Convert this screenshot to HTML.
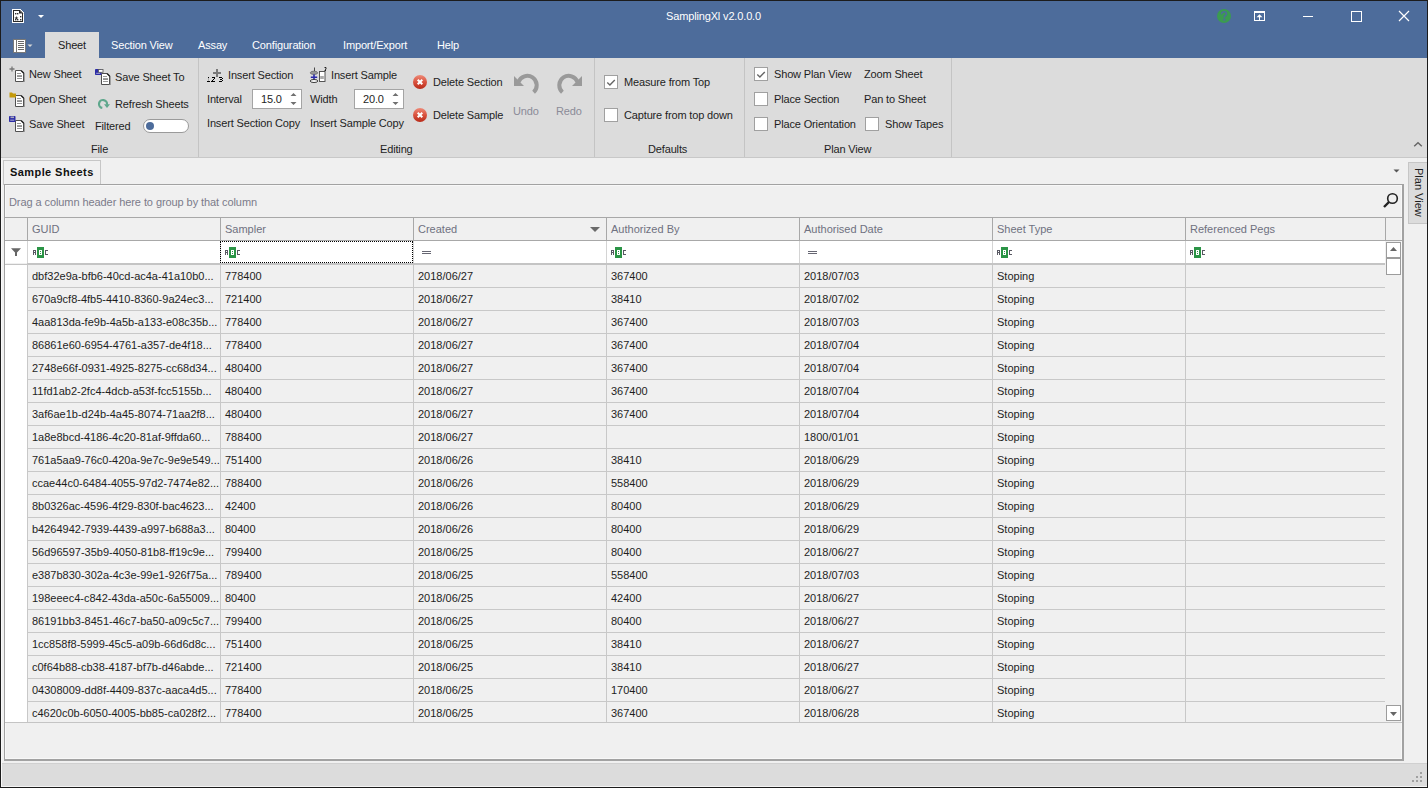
<!DOCTYPE html>
<html><head><meta charset="utf-8"><style>
html,body{margin:0;padding:0;}
body{width:1428px;height:788px;position:relative;overflow:hidden;background:#f0f0f0;font-family:"Liberation Sans", sans-serif;font-size:11px;}
body div{position:absolute;}
.t{white-space:pre;line-height:13px;}
.r{letter-spacing:-0.15px;}
</style></head><body>
<div style="left:0px;top:0px;width:1428px;height:58px;background:#4d6c9b"></div><div class="t r" style="left:666px;top:10px;font-size:11px;color:#fff">SamplingXl v2.0.0.0</div><svg style="position:absolute;left:12px;top:9px;" width="13" height="15" viewBox="0 0 13 15"><g shape-rendering="crispEdges"><path d="M0 0 H8 L12 4 V14 H0 Z" fill="#fff"/><rect x="1" y="1" width="7" height="1" fill="#2a2a2a"/><rect x="1" y="1" width="1" height="12" fill="#2a2a2a"/><rect x="1" y="12" width="10" height="1" fill="#2a2a2a"/><rect x="10" y="4" width="1" height="9" fill="#2a2a2a"/></g><path d="M7 1 L7 4.5 L10.8 4.5 Z" fill="#2a2a2a"/><path d="M7.5 1 L10.8 4.3" stroke="#2a2a2a" stroke-width="1"/><g fill="#333"><rect x="3" y="4" width="1.4" height="1.4"/><rect x="5" y="4" width="1.4" height="1.4"/><rect x="8" y="7" width="1.4" height="1.4"/><rect x="8" y="10" width="1.4" height="1.4"/><rect x="3" y="10" width="1.4" height="1.4"/><rect x="5" y="10" width="1.4" height="1.4"/></g><path d="M4.4 6.9 L5 8.4 L6.5 8.4 L5.3 9.3 L5.8 10.8 L4.4 9.9 L3 10.8 L3.5 9.3 L2.3 8.4 L3.8 8.4 Z" fill="#333"/></svg><svg style="position:absolute;left:37px;top:14px;" width="8" height="5" viewBox="0 0 8 5"><path d="M1 1 H7 L4 4 Z" fill="#fff"/></svg><svg style="position:absolute;left:13px;top:39px;" width="13" height="14" viewBox="0 0 13 14"><rect x="0.5" y="0.5" width="12" height="13" fill="#fff" stroke="#787878"/><line x1="3.5" y1="0.5" x2="3.5" y2="13.5" stroke="#787878"/><line x1="5" y1="2.5" x2="11" y2="2.5" stroke="#6a6a6a" stroke-width="1"/><line x1="5" y1="4.5" x2="11" y2="4.5" stroke="#6a6a6a" stroke-width="1"/><line x1="5" y1="6.5" x2="11" y2="6.5" stroke="#6a6a6a" stroke-width="1"/><line x1="5" y1="8.5" x2="11" y2="8.5" stroke="#6a6a6a" stroke-width="1"/><line x1="5" y1="10.5" x2="11" y2="10.5" stroke="#6a6a6a" stroke-width="1"/></svg><svg style="position:absolute;left:27px;top:44px;" width="6" height="4" viewBox="0 0 6 4"><path d="M0.5 0.5 H5.5 L3 3 Z" fill="#d8d8d8"/></svg><svg style="position:absolute;left:1217px;top:9px;" width="14" height="14" viewBox="0 0 14 14"><circle cx="7" cy="7" r="7" fill="#3b9b50"/><path d="M4.6 5.2 C4.6 3.6 5.7 2.8 7 2.8 C8.4 2.8 9.4 3.7 9.4 4.9 C9.4 6.3 7.7 6.6 7.4 7.8 L7.3 8.6" fill="none" stroke="#4d6c9b" stroke-width="1.6"/><rect x="6.3" y="9.6" width="2" height="2" fill="#4d6c9b"/></svg><svg style="position:absolute;left:1254px;top:11px;" width="11" height="10" viewBox="0 0 11 10"><g shape-rendering="crispEdges" fill="#fff"><rect x="0" y="0" width="11" height="2"/><rect x="0" y="0" width="1" height="10"/><rect x="10" y="0" width="1" height="10"/><rect x="0" y="9" width="11" height="1"/><rect x="5" y="5" width="1" height="4"/></g><path d="M2.5 6.3 L5.5 3.2 L8.5 6.3 Z" fill="#fff"/></svg><div style="left:1303px;top:16px;width:10px;height:1px;background:#fff"></div><svg style="position:absolute;left:1351px;top:11px;" width="11" height="11" viewBox="0 0 11 11"><rect x="0.5" y="0.5" width="10" height="10" fill="none" stroke="#fff"/></svg><svg style="position:absolute;left:1398px;top:10px;" width="12" height="12" viewBox="0 0 12 12"><path d="M1 1 L11 11 M11 1 L1 11" stroke="#fff" stroke-width="1.2"/></svg><div style="left:45px;top:32px;width:54px;height:26px;background:#dcdcdc"></div><div class="t r" style="left:58px;top:39px;font-size:11px;color:#1a1a1a">Sheet</div><div class="t r" style="left:111px;top:39px;font-size:11px;color:#fff">Section View</div><div class="t r" style="left:198px;top:39px;font-size:11px;color:#fff">Assay</div><div class="t r" style="left:252px;top:39px;font-size:11px;color:#fff">Configuration</div><div class="t r" style="left:343px;top:39px;font-size:11px;color:#fff">Import/Export</div><div class="t r" style="left:437px;top:39px;font-size:11px;color:#fff">Help</div><div style="left:0px;top:58px;width:1428px;height:99px;background:#dcdcdc"></div><div style="left:0px;top:157px;width:1428px;height:1px;background:#c8c8c8"></div><div style="left:198px;top:58px;width:1px;height:99px;background:#c4c4c4"></div><div style="left:594px;top:58px;width:1px;height:99px;background:#c4c4c4"></div><div style="left:744px;top:58px;width:1px;height:99px;background:#c4c4c4"></div><div style="left:951px;top:58px;width:1px;height:99px;background:#c4c4c4"></div><div class="t r" style="left:91px;top:143px;font-size:11px;color:#1e1e1e">File</div><div class="t r" style="left:380px;top:143px;font-size:11px;color:#1e1e1e">Editing</div><div class="t r" style="left:648px;top:143px;font-size:11px;color:#1e1e1e">Defaults</div><div class="t r" style="left:824px;top:143px;font-size:11px;color:#1e1e1e">Plan View</div><svg style="position:absolute;left:1412px;top:140px;" width="12" height="8" viewBox="0 0 12 8"><path d="M2.2 6.3 L6 2.7 L9.8 6.3" fill="none" stroke="#666" stroke-width="1.4"/></svg><svg style="position:absolute;left:15px;top:70px;" width="11" height="13" viewBox="0 0 11 13"><path d="M0.5 0.5 H6 L8.5 3 V11.5 H0.5 Z" fill="#fff" stroke="#505050" stroke-width="1"/><path d="M6 0.5 L8.8 3.3" stroke="#222" stroke-width="1.3"/><line x1="9.5" y1="3" x2="9.5" y2="12" stroke="#a0a0a0"/><line x1="2" y1="3.5" x2="6" y2="3.5" stroke="#999"/><rect x="2" y="5.3" width="5" height="1.5" fill="#777"/><line x1="2" y1="8.5" x2="7" y2="8.5" stroke="#999"/></svg><svg style="position:absolute;left:9px;top:66px;" width="6" height="6" viewBox="0 0 6 6"><path d="M3 0.5 V5.5 M0.5 3 H5.5" stroke="#777" stroke-width="1.3"/></svg><svg style="position:absolute;left:15px;top:95px;" width="11" height="13" viewBox="0 0 11 13"><path d="M0.5 0.5 H6 L8.5 3 V11.5 H0.5 Z" fill="#fff" stroke="#505050" stroke-width="1"/><path d="M6 0.5 L8.8 3.3" stroke="#222" stroke-width="1.3"/><line x1="9.5" y1="3" x2="9.5" y2="12" stroke="#a0a0a0"/><line x1="2" y1="3.5" x2="6" y2="3.5" stroke="#999"/><rect x="2" y="5.3" width="5" height="1.5" fill="#777"/><line x1="2" y1="8.5" x2="7" y2="8.5" stroke="#999"/></svg><svg style="position:absolute;left:9px;top:91px;" width="8" height="7" viewBox="0 0 8 7"><path d="M0.5 1.5 H3 L4 2.5 H7 V6.5 H0.5 Z" fill="#c49a0c"/></svg><svg style="position:absolute;left:15px;top:120px;" width="11" height="13" viewBox="0 0 11 13"><path d="M0.5 0.5 H6 L8.5 3 V11.5 H0.5 Z" fill="#fff" stroke="#505050" stroke-width="1"/><path d="M6 0.5 L8.8 3.3" stroke="#222" stroke-width="1.3"/><line x1="9.5" y1="3" x2="9.5" y2="12" stroke="#a0a0a0"/><line x1="2" y1="3.5" x2="6" y2="3.5" stroke="#999"/><rect x="2" y="5.3" width="5" height="1.5" fill="#777"/><line x1="2" y1="8.5" x2="7" y2="8.5" stroke="#999"/></svg><svg style="position:absolute;left:9px;top:116px;" width="7" height="6" viewBox="0 0 7 6"><rect x="0" y="0" width="6.5" height="6" rx="0.8" fill="#2c2ca6"/><rect x="1.5" y="0.5" width="3.5" height="1.6" fill="#aab"/><rect x="1.2" y="3.6" width="4" height="1.2" fill="#99c"/></svg><svg style="position:absolute;left:101px;top:73px;" width="11" height="13" viewBox="0 0 11 13"><path d="M0.5 0.5 H6 L8.5 3 V11.5 H0.5 Z" fill="#fff" stroke="#505050" stroke-width="1"/><path d="M6 0.5 L8.8 3.3" stroke="#222" stroke-width="1.3"/><line x1="9.5" y1="3" x2="9.5" y2="12" stroke="#a0a0a0"/><line x1="2" y1="3.5" x2="6" y2="3.5" stroke="#999"/><rect x="2" y="5.3" width="5" height="1.5" fill="#777"/><line x1="2" y1="8.5" x2="7" y2="8.5" stroke="#999"/></svg><svg style="position:absolute;left:95px;top:69px;" width="9" height="7" viewBox="0 0 9 7"><rect x="0" y="0" width="6.5" height="6" rx="0.8" fill="#2c2ca6"/><rect x="3.5" y="0.5" width="4.5" height="2.8" fill="#fff" stroke="#555" stroke-width="0.8"/><rect x="1.2" y="3.8" width="4" height="1.1" fill="#99c"/></svg><svg style="position:absolute;left:97px;top:98px;" width="14" height="13" viewBox="0 0 14 13"><path d="M5.3 9.94 A4 4 0 1 1 9.94 6.69" fill="none" stroke="#5ea78c" stroke-width="2.2"/><path d="M7 6.2 L13 6.2 L10 9.9 Z" fill="#5ea78c"/></svg><div class="t r" style="left:29px;top:68px;font-size:11px;color:#1e1e1e">New Sheet</div><div class="t r" style="left:29px;top:93px;font-size:11px;color:#1e1e1e">Open Sheet</div><div class="t r" style="left:29px;top:118px;font-size:11px;color:#1e1e1e">Save Sheet</div><div class="t r" style="left:115px;top:71px;font-size:11px;color:#1e1e1e">Save Sheet To</div><div class="t r" style="left:115px;top:98px;font-size:11px;color:#1e1e1e">Refresh Sheets</div><div class="t r" style="left:95px;top:120px;font-size:11px;color:#1e1e1e">Filtered</div><div style="left:143px;top:119px;width:44px;height:12px;background:#fff;border:1px solid #9a9a9a;border-radius:7px"></div><div style="left:146px;top:122px;width:8px;height:8px;background:#4d6c9b;border-radius:50%"></div><svg style="position:absolute;left:204px;top:64px;" width="20" height="20" viewBox="0 0 20 20"><path d="M13 5 V13 M9 9 H17" stroke="#7a7a7a" stroke-width="2"/><rect x="4" y="13" width="1" height="1" fill="#000"/><rect x="4" y="14" width="1" height="3" fill="#b0b0b0"/><rect x="3" y="17" width="3" height="1" fill="#000"/><rect x="8" y="13" width="3" height="1" fill="#000"/><rect x="10" y="14" width="1" height="1" fill="#000"/><rect x="9" y="15" width="1" height="1" fill="#000"/><rect x="8" y="16" width="1" height="1" fill="#000"/><rect x="7" y="17" width="4" height="1" fill="#000"/><rect x="15" y="13" width="3" height="1" fill="#000"/><rect x="18" y="14" width="1" height="1" fill="#000"/><rect x="16" y="15" width="2" height="1" fill="#000"/><rect x="18" y="16" width="1" height="1" fill="#000"/><rect x="15" y="17" width="3" height="1" fill="#000"/></svg><svg style="position:absolute;left:309px;top:66px;" width="18" height="18" viewBox="0 0 18 18"><ellipse cx="5" cy="6.8" rx="3.7" ry="1.6" fill="#999" stroke="#777"/><path d="M5 8.5 V15 M1.8 11.3 H8.2" stroke="#2a2aa8" stroke-width="1.6"/><ellipse cx="5" cy="15" rx="3.8" ry="1.5" fill="#fff" stroke="#3a3a3a" stroke-width="1"/><line x1="5.5" y1="1.5" x2="5.5" y2="5" stroke="#222" stroke-width="0.8"/><rect x="10.5" y="5.5" width="5.5" height="10" fill="#fff" stroke="#444" stroke-width="0.9"/><rect x="11.2" y="10" width="3.6" height="3" fill="#aaa"/><path d="M15.5 1.5 H17 V3 L15.8 4.5 H17" fill="none" stroke="#111" stroke-width="0.9"/></svg><div class="t r" style="left:228px;top:69px;font-size:11px;color:#1e1e1e">Insert Section</div><div class="t r" style="left:331px;top:69px;font-size:11px;color:#1e1e1e">Insert Sample</div><div class="t r" style="left:207px;top:93px;font-size:11px;color:#1e1e1e">Interval</div><div class="t r" style="left:310px;top:93px;font-size:11px;color:#1e1e1e">Width</div><div class="t r" style="left:207px;top:117px;font-size:11px;color:#1e1e1e">Insert Section Copy</div><div class="t r" style="left:310px;top:117px;font-size:11px;color:#1e1e1e">Insert Sample Copy</div><div class="t r" style="left:433px;top:76px;font-size:11px;color:#1e1e1e">Delete Section</div><div class="t r" style="left:433px;top:109px;font-size:11px;color:#1e1e1e">Delete Sample</div><div style="left:252px;top:89px;width:48px;height:18px;background:#fff;border:1px solid #a4a4a4"></div><div class="t r" style="left:261px;top:93px;font-size:11px;color:#1e1e1e">15.0</div><svg style="position:absolute;left:290px;top:92px;" width="8" height="14" viewBox="0 0 8 14"><path d="M0.5 4 H6.5 L3.5 1 Z M0.5 10 H6.5 L3.5 13 Z" fill="#707070"/></svg><div style="left:354px;top:89px;width:48px;height:18px;background:#fff;border:1px solid #a4a4a4"></div><div class="t r" style="left:363px;top:93px;font-size:11px;color:#1e1e1e">20.0</div><svg style="position:absolute;left:392px;top:92px;" width="8" height="14" viewBox="0 0 8 14"><path d="M0.5 4 H6.5 L3.5 1 Z M0.5 10 H6.5 L3.5 13 Z" fill="#707070"/></svg><svg style="position:absolute;left:413px;top:75px;" width="14" height="14" viewBox="0 0 14 14"><defs><linearGradient id="rg" x1="0" y1="0" x2="0" y2="1"><stop offset="0" stop-color="#ee8a78"/><stop offset="0.5" stop-color="#d9533f"/><stop offset="1" stop-color="#b82a18"/></linearGradient></defs><circle cx="7" cy="7" r="7" fill="url(#rg)"/><path d="M4.7 4.7 L9.3 9.3 M9.3 4.7 L4.7 9.3" stroke="#fff" stroke-width="2"/></svg><svg style="position:absolute;left:413px;top:108px;" width="14" height="14" viewBox="0 0 14 14"><defs><linearGradient id="rg" x1="0" y1="0" x2="0" y2="1"><stop offset="0" stop-color="#ee8a78"/><stop offset="0.5" stop-color="#d9533f"/><stop offset="1" stop-color="#b82a18"/></linearGradient></defs><circle cx="7" cy="7" r="7" fill="url(#rg)"/><path d="M4.7 4.7 L9.3 9.3 M9.3 4.7 L4.7 9.3" stroke="#fff" stroke-width="2"/></svg><svg style="position:absolute;left:513px;top:73px;" width="27" height="22" viewBox="0 0 27 22"><path d="M5.47 8.98 A9.4 9.4 0 1 1 20.6 19.2" fill="none" stroke="#9a9a9a" stroke-width="4"/><path d="M1 3 V13 H11 Z" fill="#9a9a9a"/></svg><svg style="position:absolute;left:556px;top:73px;" width="27" height="22" viewBox="0 0 27 22"><g transform="translate(27,0) scale(-1,1)"><path d="M5.47 8.98 A9.4 9.4 0 1 1 20.6 19.2" fill="none" stroke="#9a9a9a" stroke-width="4"/><path d="M1 3 V13 H11 Z" fill="#9a9a9a"/></g></svg><div class="t r" style="left:513px;top:105px;font-size:11px;color:#8b8b98">Undo</div><div class="t r" style="left:556px;top:105px;font-size:11px;color:#8b8b98">Redo</div><div style="left:604px;top:75px;width:12px;height:12px;background:#fff;border:1px solid #a0a0a0"></div><svg style="position:absolute;left:604px;top:75px;" width="14" height="14" viewBox="0 0 14 14"><path d="M3.3 7.6 L5.9 10 L10.8 5" fill="none" stroke="#666" stroke-width="1.4"/></svg><div class="t r" style="left:624px;top:76px;font-size:11px;color:#1e1e1e">Measure from Top</div><div style="left:604px;top:108px;width:12px;height:12px;background:#fff;border:1px solid #a0a0a0"></div><div class="t r" style="left:624px;top:109px;font-size:11px;color:#1e1e1e">Capture from top down</div><div style="left:754px;top:67px;width:12px;height:12px;background:#fff;border:1px solid #a0a0a0"></div><svg style="position:absolute;left:754px;top:67px;" width="14" height="14" viewBox="0 0 14 14"><path d="M3.3 7.6 L5.9 10 L10.8 5" fill="none" stroke="#666" stroke-width="1.4"/></svg><div class="t r" style="left:774px;top:68px;font-size:11px;color:#1e1e1e">Show Plan View</div><div style="left:754px;top:92px;width:12px;height:12px;background:#fff;border:1px solid #a0a0a0"></div><div class="t r" style="left:774px;top:93px;font-size:11px;color:#1e1e1e">Place Section</div><div style="left:754px;top:117px;width:12px;height:12px;background:#fff;border:1px solid #a0a0a0"></div><div class="t r" style="left:774px;top:118px;font-size:11px;color:#1e1e1e">Place Orientation</div><div class="t r" style="left:864px;top:68px;font-size:11px;color:#1e1e1e">Zoom Sheet</div><div class="t r" style="left:864px;top:93px;font-size:11px;color:#1e1e1e">Pan to Sheet</div><div style="left:865px;top:117px;width:12px;height:12px;background:#fff;border:1px solid #a0a0a0"></div><div class="t r" style="left:885px;top:118px;font-size:11px;color:#1e1e1e">Show Tapes</div><div style="left:0px;top:158px;width:1428px;height:605px;background:#f0f0f0"></div><div style="left:3px;top:160px;width:96px;height:24px;border:1px solid #c6c6c6;border-bottom:none;background:#f0f0f0"></div><div class="t" style="left:10px;top:166px;font-size:11px;color:#111;font-weight:bold;letter-spacing:0.42px">Sample Sheets</div><svg style="position:absolute;left:1393px;top:169px;" width="8" height="5" viewBox="0 0 8 5"><path d="M0.5 0.5 H6.5 L3.5 3.5 Z" fill="#555"/></svg><div style="left:1408px;top:162px;width:19px;height:60px;background:#dcdcdc;border:1px solid #c6c6c6;border-right:none"></div><div class="t" style="left:1425px;top:168px;transform-origin:0 0;transform:rotate(90deg);color:#1e1e1e">Plan View</div><div style="left:4px;top:184px;width:1400px;height:577px;border:1px solid #a2a2a2;border-right-width:2px;border-bottom-width:2px;background:#f0f0f0;box-sizing:border-box;box-shadow:inset 1px 1px 0 #f8f8f8,inset -1px -1px 0 #f8f8f8"></div><div class="t" style="left:9px;top:196px;font-size:11px;color:#7b7b8a;letter-spacing:-0.08px">Drag a column header here to group by that column</div><svg style="position:absolute;left:1382px;top:192px;" width="18" height="19" viewBox="0 0 18 19"><circle cx="10.5" cy="6.5" r="4.8" fill="none" stroke="#222" stroke-width="1.6"/><path d="M7 10 L2 15" stroke="#222" stroke-width="2.4"/></svg><div style="left:5px;top:217px;width:1397px;height:1px;background:#a8a8a8"></div><div style="left:5px;top:240px;width:1397px;height:1px;background:#a8a8a8"></div><div style="left:5px;top:241px;width:1380px;height:22px;background:#fff"></div><div style="left:27px;top:263px;width:1358px;height:2px;background:#c4c4c4"></div><div style="left:5px;top:264px;width:22px;height:1px;background:#c4c4c4"></div><div style="left:5px;top:265px;width:22px;height:457px;background:#fff"></div><div style="left:27px;top:218px;width:1px;height:22px;background:#a8a8a8"></div><div style="left:27px;top:241px;width:1px;height:22px;background:#d4d4d4"></div><div style="left:27px;top:265px;width:1px;height:457px;background:#c8c8c8"></div><div style="left:220px;top:218px;width:1px;height:22px;background:#a8a8a8"></div><div style="left:220px;top:241px;width:1px;height:22px;background:#d4d4d4"></div><div style="left:220px;top:265px;width:1px;height:457px;background:#c8c8c8"></div><div style="left:413px;top:218px;width:1px;height:22px;background:#a8a8a8"></div><div style="left:413px;top:241px;width:1px;height:22px;background:#d4d4d4"></div><div style="left:413px;top:265px;width:1px;height:457px;background:#c8c8c8"></div><div style="left:606px;top:218px;width:1px;height:22px;background:#a8a8a8"></div><div style="left:606px;top:241px;width:1px;height:22px;background:#d4d4d4"></div><div style="left:606px;top:265px;width:1px;height:457px;background:#c8c8c8"></div><div style="left:799px;top:218px;width:1px;height:22px;background:#a8a8a8"></div><div style="left:799px;top:241px;width:1px;height:22px;background:#d4d4d4"></div><div style="left:799px;top:265px;width:1px;height:457px;background:#c8c8c8"></div><div style="left:992px;top:218px;width:1px;height:22px;background:#a8a8a8"></div><div style="left:992px;top:241px;width:1px;height:22px;background:#d4d4d4"></div><div style="left:992px;top:265px;width:1px;height:457px;background:#c8c8c8"></div><div style="left:1185px;top:218px;width:1px;height:22px;background:#a8a8a8"></div><div style="left:1185px;top:241px;width:1px;height:22px;background:#d4d4d4"></div><div style="left:1185px;top:265px;width:1px;height:457px;background:#c8c8c8"></div><div style="left:1385px;top:218px;width:1px;height:22px;background:#a8a8a8"></div><div class="t" style="left:32px;top:223px;font-size:11px;color:#6f7180">GUID</div><div class="t" style="left:225px;top:223px;font-size:11px;color:#6f7180">Sampler</div><div class="t" style="left:418px;top:223px;font-size:11px;color:#6f7180">Created</div><div class="t" style="left:611px;top:223px;font-size:11px;color:#6f7180">Authorized By</div><div class="t" style="left:804px;top:223px;font-size:11px;color:#6f7180">Authorised Date</div><div class="t" style="left:997px;top:223px;font-size:11px;color:#6f7180">Sheet Type</div><div class="t" style="left:1190px;top:223px;font-size:11px;color:#6f7180">Referenced Pegs</div><svg style="position:absolute;left:589px;top:226px;" width="12" height="8" viewBox="0 0 12 8"><path d="M1 1 H11 L6 6 Z" fill="#6a6a6a"/></svg><svg style="position:absolute;left:11px;top:248px;" width="11" height="9" viewBox="0 0 11 9"><path d="M0 0.3 H10 L6 4.5 V8 H4 V4.5 Z" fill="#666"/></svg><svg style="position:absolute;left:33px;top:247px;" width="15" height="11" viewBox="0 0 15 11"><g shape-rendering="crispEdges"><g fill="#585862"><rect x="0" y="3" width="3" height="1"/><rect x="0" y="3" width="1" height="5"/><rect x="2" y="3" width="1" height="5"/><rect x="0" y="5" width="3" height="1"/><rect x="12" y="3" width="3" height="1"/><rect x="12" y="3" width="1" height="5"/><rect x="12" y="7" width="3" height="1"/></g><rect x="4" y="0" width="7" height="11" fill="#2b9446"/><rect x="6" y="3" width="3" height="5" fill="#fff"/><rect x="7" y="4" width="1" height="1" fill="#2b9446"/><rect x="7" y="6" width="1" height="1" fill="#2b9446"/></g></svg><svg style="position:absolute;left:225px;top:247px;" width="15" height="11" viewBox="0 0 15 11"><g shape-rendering="crispEdges"><g fill="#585862"><rect x="0" y="3" width="3" height="1"/><rect x="0" y="3" width="1" height="5"/><rect x="2" y="3" width="1" height="5"/><rect x="0" y="5" width="3" height="1"/><rect x="12" y="3" width="3" height="1"/><rect x="12" y="3" width="1" height="5"/><rect x="12" y="7" width="3" height="1"/></g><rect x="4" y="0" width="7" height="11" fill="#2b9446"/><rect x="6" y="3" width="3" height="5" fill="#fff"/><rect x="7" y="4" width="1" height="1" fill="#2b9446"/><rect x="7" y="6" width="1" height="1" fill="#2b9446"/></g></svg><svg style="position:absolute;left:611px;top:247px;" width="15" height="11" viewBox="0 0 15 11"><g shape-rendering="crispEdges"><g fill="#585862"><rect x="0" y="3" width="3" height="1"/><rect x="0" y="3" width="1" height="5"/><rect x="2" y="3" width="1" height="5"/><rect x="0" y="5" width="3" height="1"/><rect x="12" y="3" width="3" height="1"/><rect x="12" y="3" width="1" height="5"/><rect x="12" y="7" width="3" height="1"/></g><rect x="4" y="0" width="7" height="11" fill="#2b9446"/><rect x="6" y="3" width="3" height="5" fill="#fff"/><rect x="7" y="4" width="1" height="1" fill="#2b9446"/><rect x="7" y="6" width="1" height="1" fill="#2b9446"/></g></svg><svg style="position:absolute;left:997px;top:247px;" width="15" height="11" viewBox="0 0 15 11"><g shape-rendering="crispEdges"><g fill="#585862"><rect x="0" y="3" width="3" height="1"/><rect x="0" y="3" width="1" height="5"/><rect x="2" y="3" width="1" height="5"/><rect x="0" y="5" width="3" height="1"/><rect x="12" y="3" width="3" height="1"/><rect x="12" y="3" width="1" height="5"/><rect x="12" y="7" width="3" height="1"/></g><rect x="4" y="0" width="7" height="11" fill="#2b9446"/><rect x="6" y="3" width="3" height="5" fill="#fff"/><rect x="7" y="4" width="1" height="1" fill="#2b9446"/><rect x="7" y="6" width="1" height="1" fill="#2b9446"/></g></svg><svg style="position:absolute;left:1190px;top:247px;" width="15" height="11" viewBox="0 0 15 11"><g shape-rendering="crispEdges"><g fill="#585862"><rect x="0" y="3" width="3" height="1"/><rect x="0" y="3" width="1" height="5"/><rect x="2" y="3" width="1" height="5"/><rect x="0" y="5" width="3" height="1"/><rect x="12" y="3" width="3" height="1"/><rect x="12" y="3" width="1" height="5"/><rect x="12" y="7" width="3" height="1"/></g><rect x="4" y="0" width="7" height="11" fill="#2b9446"/><rect x="6" y="3" width="3" height="5" fill="#fff"/><rect x="7" y="4" width="1" height="1" fill="#2b9446"/><rect x="7" y="6" width="1" height="1" fill="#2b9446"/></g></svg><div style="left:422px;top:251px;width:9px;height:1px;background:#666672"></div><div style="left:422px;top:253px;width:9px;height:1px;background:#666672"></div><div style="left:808px;top:251px;width:9px;height:1px;background:#666672"></div><div style="left:808px;top:253px;width:9px;height:1px;background:#666672"></div><div style="left:220px;top:241px;width:193px;height:22px;border:1px dotted #000;box-sizing:border-box"></div><div style="left:28px;top:287px;width:1357px;height:1px;background:#c8c8c8"></div><div class="t" style="left:32px;top:270px;font-size:11px;color:#1e1e1e">dbf32e9a-bfb6-40cd-ac4a-41a10b0...</div><div class="t" style="left:225px;top:270px;font-size:11px;color:#1e1e1e">778400</div><div class="t" style="left:418px;top:270px;font-size:11px;color:#1e1e1e">2018/06/27</div><div class="t" style="left:611px;top:270px;font-size:11px;color:#1e1e1e">367400</div><div class="t" style="left:804px;top:270px;font-size:11px;color:#1e1e1e">2018/07/03</div><div class="t" style="left:997px;top:270px;font-size:11px;color:#1e1e1e">Stoping</div><div style="left:28px;top:310px;width:1357px;height:1px;background:#c8c8c8"></div><div class="t" style="left:32px;top:293px;font-size:11px;color:#1e1e1e">670a9cf8-4fb5-4410-8360-9a24ec3...</div><div class="t" style="left:225px;top:293px;font-size:11px;color:#1e1e1e">721400</div><div class="t" style="left:418px;top:293px;font-size:11px;color:#1e1e1e">2018/06/27</div><div class="t" style="left:611px;top:293px;font-size:11px;color:#1e1e1e">38410</div><div class="t" style="left:804px;top:293px;font-size:11px;color:#1e1e1e">2018/07/02</div><div class="t" style="left:997px;top:293px;font-size:11px;color:#1e1e1e">Stoping</div><div style="left:28px;top:333px;width:1357px;height:1px;background:#c8c8c8"></div><div class="t" style="left:32px;top:316px;font-size:11px;color:#1e1e1e">4aa813da-fe9b-4a5b-a133-e08c35b...</div><div class="t" style="left:225px;top:316px;font-size:11px;color:#1e1e1e">778400</div><div class="t" style="left:418px;top:316px;font-size:11px;color:#1e1e1e">2018/06/27</div><div class="t" style="left:611px;top:316px;font-size:11px;color:#1e1e1e">367400</div><div class="t" style="left:804px;top:316px;font-size:11px;color:#1e1e1e">2018/07/03</div><div class="t" style="left:997px;top:316px;font-size:11px;color:#1e1e1e">Stoping</div><div style="left:28px;top:356px;width:1357px;height:1px;background:#c8c8c8"></div><div class="t" style="left:32px;top:339px;font-size:11px;color:#1e1e1e">86861e60-6954-4761-a357-de4f18...</div><div class="t" style="left:225px;top:339px;font-size:11px;color:#1e1e1e">778400</div><div class="t" style="left:418px;top:339px;font-size:11px;color:#1e1e1e">2018/06/27</div><div class="t" style="left:611px;top:339px;font-size:11px;color:#1e1e1e">367400</div><div class="t" style="left:804px;top:339px;font-size:11px;color:#1e1e1e">2018/07/04</div><div class="t" style="left:997px;top:339px;font-size:11px;color:#1e1e1e">Stoping</div><div style="left:28px;top:379px;width:1357px;height:1px;background:#c8c8c8"></div><div class="t" style="left:32px;top:362px;font-size:11px;color:#1e1e1e">2748e66f-0931-4925-8275-cc68d34...</div><div class="t" style="left:225px;top:362px;font-size:11px;color:#1e1e1e">480400</div><div class="t" style="left:418px;top:362px;font-size:11px;color:#1e1e1e">2018/06/27</div><div class="t" style="left:611px;top:362px;font-size:11px;color:#1e1e1e">367400</div><div class="t" style="left:804px;top:362px;font-size:11px;color:#1e1e1e">2018/07/04</div><div class="t" style="left:997px;top:362px;font-size:11px;color:#1e1e1e">Stoping</div><div style="left:28px;top:402px;width:1357px;height:1px;background:#c8c8c8"></div><div class="t" style="left:32px;top:385px;font-size:11px;color:#1e1e1e">11fd1ab2-2fc4-4dcb-a53f-fcc5155b...</div><div class="t" style="left:225px;top:385px;font-size:11px;color:#1e1e1e">480400</div><div class="t" style="left:418px;top:385px;font-size:11px;color:#1e1e1e">2018/06/27</div><div class="t" style="left:611px;top:385px;font-size:11px;color:#1e1e1e">367400</div><div class="t" style="left:804px;top:385px;font-size:11px;color:#1e1e1e">2018/07/04</div><div class="t" style="left:997px;top:385px;font-size:11px;color:#1e1e1e">Stoping</div><div style="left:28px;top:425px;width:1357px;height:1px;background:#c8c8c8"></div><div class="t" style="left:32px;top:408px;font-size:11px;color:#1e1e1e">3af6ae1b-d24b-4a45-8074-71aa2f8...</div><div class="t" style="left:225px;top:408px;font-size:11px;color:#1e1e1e">480400</div><div class="t" style="left:418px;top:408px;font-size:11px;color:#1e1e1e">2018/06/27</div><div class="t" style="left:611px;top:408px;font-size:11px;color:#1e1e1e">367400</div><div class="t" style="left:804px;top:408px;font-size:11px;color:#1e1e1e">2018/07/04</div><div class="t" style="left:997px;top:408px;font-size:11px;color:#1e1e1e">Stoping</div><div style="left:28px;top:448px;width:1357px;height:1px;background:#c8c8c8"></div><div class="t" style="left:32px;top:431px;font-size:11px;color:#1e1e1e">1a8e8bcd-4186-4c20-81af-9ffda60...</div><div class="t" style="left:225px;top:431px;font-size:11px;color:#1e1e1e">788400</div><div class="t" style="left:418px;top:431px;font-size:11px;color:#1e1e1e">2018/06/27</div><div class="t" style="left:804px;top:431px;font-size:11px;color:#1e1e1e">1800/01/01</div><div class="t" style="left:997px;top:431px;font-size:11px;color:#1e1e1e">Stoping</div><div style="left:28px;top:471px;width:1357px;height:1px;background:#c8c8c8"></div><div class="t" style="left:32px;top:454px;font-size:11px;color:#1e1e1e">761a5aa9-76c0-420a-9e7c-9e9e549...</div><div class="t" style="left:225px;top:454px;font-size:11px;color:#1e1e1e">751400</div><div class="t" style="left:418px;top:454px;font-size:11px;color:#1e1e1e">2018/06/26</div><div class="t" style="left:611px;top:454px;font-size:11px;color:#1e1e1e">38410</div><div class="t" style="left:804px;top:454px;font-size:11px;color:#1e1e1e">2018/06/29</div><div class="t" style="left:997px;top:454px;font-size:11px;color:#1e1e1e">Stoping</div><div style="left:28px;top:494px;width:1357px;height:1px;background:#c8c8c8"></div><div class="t" style="left:32px;top:477px;font-size:11px;color:#1e1e1e">ccae44c0-6484-4055-97d2-7474e82...</div><div class="t" style="left:225px;top:477px;font-size:11px;color:#1e1e1e">788400</div><div class="t" style="left:418px;top:477px;font-size:11px;color:#1e1e1e">2018/06/26</div><div class="t" style="left:611px;top:477px;font-size:11px;color:#1e1e1e">558400</div><div class="t" style="left:804px;top:477px;font-size:11px;color:#1e1e1e">2018/06/29</div><div class="t" style="left:997px;top:477px;font-size:11px;color:#1e1e1e">Stoping</div><div style="left:28px;top:517px;width:1357px;height:1px;background:#c8c8c8"></div><div class="t" style="left:32px;top:500px;font-size:11px;color:#1e1e1e">8b0326ac-4596-4f29-830f-bac4623...</div><div class="t" style="left:225px;top:500px;font-size:11px;color:#1e1e1e">42400</div><div class="t" style="left:418px;top:500px;font-size:11px;color:#1e1e1e">2018/06/26</div><div class="t" style="left:611px;top:500px;font-size:11px;color:#1e1e1e">80400</div><div class="t" style="left:804px;top:500px;font-size:11px;color:#1e1e1e">2018/06/29</div><div class="t" style="left:997px;top:500px;font-size:11px;color:#1e1e1e">Stoping</div><div style="left:28px;top:540px;width:1357px;height:1px;background:#c8c8c8"></div><div class="t" style="left:32px;top:523px;font-size:11px;color:#1e1e1e">b4264942-7939-4439-a997-b688a3...</div><div class="t" style="left:225px;top:523px;font-size:11px;color:#1e1e1e">80400</div><div class="t" style="left:418px;top:523px;font-size:11px;color:#1e1e1e">2018/06/26</div><div class="t" style="left:611px;top:523px;font-size:11px;color:#1e1e1e">80400</div><div class="t" style="left:804px;top:523px;font-size:11px;color:#1e1e1e">2018/06/29</div><div class="t" style="left:997px;top:523px;font-size:11px;color:#1e1e1e">Stoping</div><div style="left:28px;top:563px;width:1357px;height:1px;background:#c8c8c8"></div><div class="t" style="left:32px;top:546px;font-size:11px;color:#1e1e1e">56d96597-35b9-4050-81b8-ff19c9e...</div><div class="t" style="left:225px;top:546px;font-size:11px;color:#1e1e1e">799400</div><div class="t" style="left:418px;top:546px;font-size:11px;color:#1e1e1e">2018/06/25</div><div class="t" style="left:611px;top:546px;font-size:11px;color:#1e1e1e">80400</div><div class="t" style="left:804px;top:546px;font-size:11px;color:#1e1e1e">2018/06/27</div><div class="t" style="left:997px;top:546px;font-size:11px;color:#1e1e1e">Stoping</div><div style="left:28px;top:586px;width:1357px;height:1px;background:#c8c8c8"></div><div class="t" style="left:32px;top:569px;font-size:11px;color:#1e1e1e">e387b830-302a-4c3e-99e1-926f75a...</div><div class="t" style="left:225px;top:569px;font-size:11px;color:#1e1e1e">789400</div><div class="t" style="left:418px;top:569px;font-size:11px;color:#1e1e1e">2018/06/25</div><div class="t" style="left:611px;top:569px;font-size:11px;color:#1e1e1e">558400</div><div class="t" style="left:804px;top:569px;font-size:11px;color:#1e1e1e">2018/07/03</div><div class="t" style="left:997px;top:569px;font-size:11px;color:#1e1e1e">Stoping</div><div style="left:28px;top:609px;width:1357px;height:1px;background:#c8c8c8"></div><div class="t" style="left:32px;top:592px;font-size:11px;color:#1e1e1e">198eeec4-c842-43da-a50c-6a55009...</div><div class="t" style="left:225px;top:592px;font-size:11px;color:#1e1e1e">80400</div><div class="t" style="left:418px;top:592px;font-size:11px;color:#1e1e1e">2018/06/25</div><div class="t" style="left:611px;top:592px;font-size:11px;color:#1e1e1e">42400</div><div class="t" style="left:804px;top:592px;font-size:11px;color:#1e1e1e">2018/06/27</div><div class="t" style="left:997px;top:592px;font-size:11px;color:#1e1e1e">Stoping</div><div style="left:28px;top:632px;width:1357px;height:1px;background:#c8c8c8"></div><div class="t" style="left:32px;top:615px;font-size:11px;color:#1e1e1e">86191bb3-8451-46c7-ba50-a09c5c7...</div><div class="t" style="left:225px;top:615px;font-size:11px;color:#1e1e1e">799400</div><div class="t" style="left:418px;top:615px;font-size:11px;color:#1e1e1e">2018/06/25</div><div class="t" style="left:611px;top:615px;font-size:11px;color:#1e1e1e">80400</div><div class="t" style="left:804px;top:615px;font-size:11px;color:#1e1e1e">2018/06/27</div><div class="t" style="left:997px;top:615px;font-size:11px;color:#1e1e1e">Stoping</div><div style="left:28px;top:655px;width:1357px;height:1px;background:#c8c8c8"></div><div class="t" style="left:32px;top:638px;font-size:11px;color:#1e1e1e">1cc858f8-5999-45c5-a09b-66d6d8c...</div><div class="t" style="left:225px;top:638px;font-size:11px;color:#1e1e1e">751400</div><div class="t" style="left:418px;top:638px;font-size:11px;color:#1e1e1e">2018/06/25</div><div class="t" style="left:611px;top:638px;font-size:11px;color:#1e1e1e">38410</div><div class="t" style="left:804px;top:638px;font-size:11px;color:#1e1e1e">2018/06/27</div><div class="t" style="left:997px;top:638px;font-size:11px;color:#1e1e1e">Stoping</div><div style="left:28px;top:678px;width:1357px;height:1px;background:#c8c8c8"></div><div class="t" style="left:32px;top:661px;font-size:11px;color:#1e1e1e">c0f64b88-cb38-4187-bf7b-d46abde...</div><div class="t" style="left:225px;top:661px;font-size:11px;color:#1e1e1e">721400</div><div class="t" style="left:418px;top:661px;font-size:11px;color:#1e1e1e">2018/06/25</div><div class="t" style="left:611px;top:661px;font-size:11px;color:#1e1e1e">38410</div><div class="t" style="left:804px;top:661px;font-size:11px;color:#1e1e1e">2018/06/27</div><div class="t" style="left:997px;top:661px;font-size:11px;color:#1e1e1e">Stoping</div><div style="left:28px;top:701px;width:1357px;height:1px;background:#c8c8c8"></div><div class="t" style="left:32px;top:684px;font-size:11px;color:#1e1e1e">04308009-dd8f-4409-837c-aaca4d5...</div><div class="t" style="left:225px;top:684px;font-size:11px;color:#1e1e1e">778400</div><div class="t" style="left:418px;top:684px;font-size:11px;color:#1e1e1e">2018/06/25</div><div class="t" style="left:611px;top:684px;font-size:11px;color:#1e1e1e">170400</div><div class="t" style="left:804px;top:684px;font-size:11px;color:#1e1e1e">2018/06/27</div><div class="t" style="left:997px;top:684px;font-size:11px;color:#1e1e1e">Stoping</div><div class="t" style="left:32px;top:707px;font-size:11px;color:#1e1e1e">c4620c0b-6050-4005-bb85-ca028f2...</div><div class="t" style="left:225px;top:707px;font-size:11px;color:#1e1e1e">778400</div><div class="t" style="left:418px;top:707px;font-size:11px;color:#1e1e1e">2018/06/25</div><div class="t" style="left:611px;top:707px;font-size:11px;color:#1e1e1e">367400</div><div class="t" style="left:804px;top:707px;font-size:11px;color:#1e1e1e">2018/06/28</div><div class="t" style="left:997px;top:707px;font-size:11px;color:#1e1e1e">Stoping</div><div style="left:5px;top:722px;width:1397px;height:1px;background:#c4c4c4"></div><div style="left:1386px;top:242px;width:15px;height:16px;background:#fff;border:1px solid #9c9c9c;box-sizing:border-box"></div><div style="left:1386px;top:257px;width:15px;height:18px;background:#fff;border:1px solid #9c9c9c;box-sizing:border-box;border-top-width:2px"></div><div style="left:1386px;top:705px;width:15px;height:16px;background:#fff;border:1px solid #9c9c9c;box-sizing:border-box"></div><svg style="position:absolute;left:1389px;top:246px;" width="9" height="6" viewBox="0 0 9 6"><path d="M1 5 H8 L4.5 1 Z" fill="#666"/></svg><svg style="position:absolute;left:1389px;top:711px;" width="9" height="6" viewBox="0 0 9 6"><path d="M1 1 H8 L4.5 5 Z" fill="#666"/></svg><div style="left:0px;top:763px;width:1428px;height:1px;background:#d0d0d0"></div><div style="left:0px;top:764px;width:1428px;height:23px;background:#dcdcdc"></div><div style="left:1px;top:786px;width:1426px;height:1px;background:#f4f4f4"></div><div style="left:1420px;top:772px;width:2px;height:2px;background:#a0a0a0"></div><div style="left:1416px;top:776px;width:2px;height:2px;background:#a0a0a0"></div><div style="left:1420px;top:776px;width:2px;height:2px;background:#a0a0a0"></div><div style="left:1412px;top:780px;width:2px;height:2px;background:#a0a0a0"></div><div style="left:1416px;top:780px;width:2px;height:2px;background:#a0a0a0"></div><div style="left:1420px;top:780px;width:2px;height:2px;background:#a0a0a0"></div><div style="left:0px;top:0px;width:1428px;height:1px;background:#1c1c1c"></div><div style="left:0px;top:0px;width:1px;height:788px;background:#1c1c1c"></div><div style="left:1427px;top:0px;width:1px;height:788px;background:#1c1c1c"></div><div style="left:0px;top:787px;width:1428px;height:1px;background:#1c1c1c"></div><div style="left:1px;top:158px;width:1px;height:629px;background:#f8f8f8"></div>
</body></html>
